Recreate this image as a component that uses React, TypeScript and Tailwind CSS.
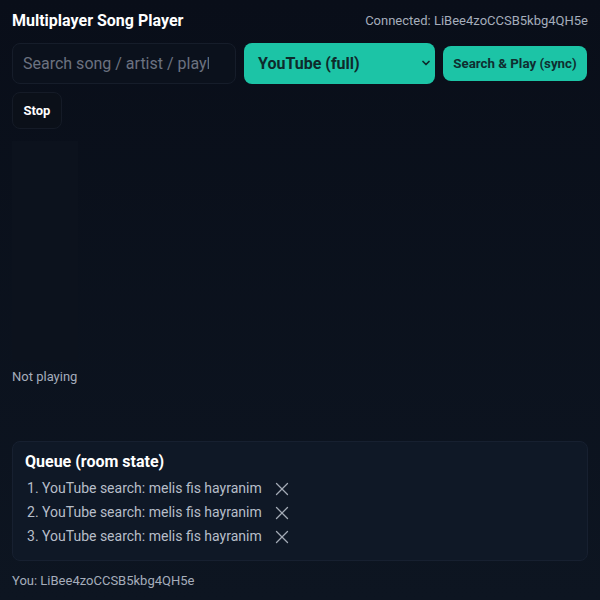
import { X, ChevronDown } from "lucide-react"

export default function App() {
  const me = "LiBee4zoCCSB5kbg4QH5e"
  const queue = [
    "YouTube search: melis fis hayranim",
    "YouTube search: melis fis hayranim",
    "YouTube search: melis fis hayranim",
  ]

  return (
    <div
      className="min-h-[600px] w-full bg-gradient-to-b from-[#090e19] to-[#0d1521] px-3 pt-[10px] text-[#e5e9f0]"
      style={{ fontFamily: "Roboto, 'Liberation Sans', sans-serif" }}
    >
      <div className="flex items-center justify-between h-[22px]">
        <h1 className="text-[16px] font-bold text-white">Multiplayer Song Player</h1>
        <span className="text-[13px] text-[#a5adbb]">Connected: {me}</span>
      </div>

      <div className="mt-[11px] flex items-center gap-2">
        <input
          className="h-[41px] w-[224px] rounded-lg border border-[#161d2a] bg-[#0b111c] pl-[10px] pr-[26px] text-[16px] text-white placeholder:text-[#6b7280] outline-none"
          placeholder="Search song / artist / playlist"
        />
        <div className="relative h-[41px] w-[191px] rounded-lg bg-[#1cc4a6]">
          <span className="absolute left-[14px] top-[9px] text-[16px] font-bold text-[#0e2a2b]">
            YouTube (full)
          </span>
          <ChevronDown className="absolute right-[3px] top-[14px] h-3 w-3 text-[#0e2a2b]" strokeWidth={3.5} />
        </div>
        <button className="h-[35px] w-[144px] rounded-lg bg-[#1cc4a6] text-[13.3px] font-bold text-[#0f2e30]">
          Search &amp; Play (sync)
        </button>
      </div>

      <button className="mt-2 h-[37px] w-[50px] rounded-lg border border-[#151b27] bg-[#0b1019] text-[13px] font-bold text-white">
        Stop
      </button>

      <div className="mt-3 h-[220px] w-[66px] bg-[#0c121d]" />

      <p className="mt-[6px] text-[13px] text-[#a5adbb]">Not playing</p>

      <div className="mt-[54px] rounded-lg border border-[#172030] bg-[#0f1826] px-3 pt-[8px] pb-[11px]">
        <h2 className="text-[16px] font-bold text-white">Queue (room state)</h2>
        <ol className="mt-[3px] flex flex-col">
          {queue.map((q, i) => (
            <li key={i} className="flex h-[24px] items-center pl-[2px] text-[14px] text-[#b7bec9]">
              <span>
                {i + 1}. {q}
              </span>
              {/* remove-from-queue control */}
              <X className="ml-[9px] h-[22px] w-[22px] text-[#a3aab5]" strokeWidth={1.4} />
            </li>
          ))}
        </ol>
      </div>

      <p className="mt-[10px] text-[13px] text-[#a5adbb]">You: {me}</p>
    </div>
  )
}
